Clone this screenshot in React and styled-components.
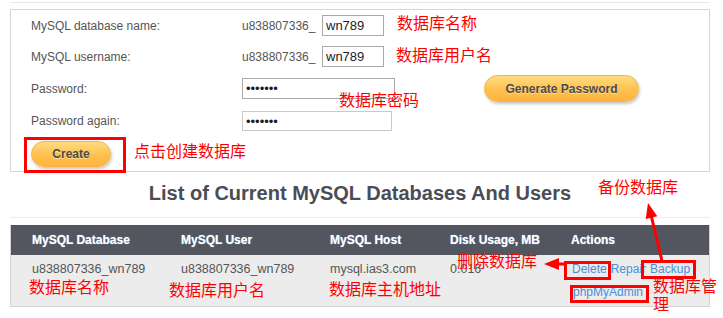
import React from "react";
import styled, { createGlobalStyle } from "styled-components";

const GlobalStyle = createGlobalStyle`
  body {
    margin: 0;
    background: #fff;
    font-family: "Liberation Sans", Arial, sans-serif;
  }
`;

const Page = styled.div`
  position: relative;
  width: 723px;
  height: 318px;
  padding: 2px 13px 0 10px;
  box-sizing: border-box;
  overflow: hidden;
`;

const TopRule = styled.div`
  border-top: 1px solid #e8e8e8;
  margin-bottom: 6px;
`;

const FormBox = styled.div`
  border: 1px solid #d6d6d6;
  padding: 0 0 4px 20px;
  display: grid;
  grid-template-columns: 211px 1fr;
  grid-template-rows: 31px 31px 33px 32px auto;
  align-items: center;
`;

const Label = styled.div`
  font-size: 12px;
  color: #555;
`;

const Field = styled.div`
  display: flex;
  align-items: center;
`;

const Prefix = styled.span`
  width: 80px;
  font-size: 12px;
  color: #555;
`;

const TextInput = styled.input`
  box-sizing: border-box;
  width: ${(p) => p.$w}px;
  height: ${(p) => p.$h || 21}px;
  border: 1px solid ${(p) => (p.$light ? "#c9c9c9" : "#a9a9a9")};
  padding: 0 3px;
  margin: 0;
  font-family: "Liberation Sans", Arial, sans-serif;
  font-size: 13px;
  color: #1b1b2b;
  background: #fff;
  outline: none;
`;

const OrangeButton = styled.button`
  box-sizing: border-box;
  width: ${(p) => p.$w}px;
  height: ${(p) => p.$h}px;
  margin-left: ${(p) => p.$ml || 0}px;
  border: 1px solid #f2b545;
  border-radius: 14px;
  background: linear-gradient(#ffdb80, #fec04f 55%, #fdb43c);
  box-shadow: 1px 2px 3px rgba(0, 0, 0, 0.22);
  font-family: "Liberation Sans", Arial, sans-serif;
  font-size: 12px;
  font-weight: bold;
  color: #4b4b4b;
  text-shadow: 0 1px 0 rgba(255, 255, 255, 0.5);
  padding: 0;
  cursor: pointer;
`;

const CreateRow = styled.div`
  grid-column: 1 / 3;
  padding-top: 4px;
`;

const Heading = styled.h2`
  margin: 0;
  height: 45px;
  line-height: 42px;
  text-align: center;
  font-size: 20px;
  font-weight: bold;
  color: #4a4d56;
  border-bottom: 1px solid #ececec;
`;

const Table = styled.div`
  margin-top: 7px;
  border: 1px solid #d3d3d3;
  border-top: none;
`;

const Row = styled.div`
  display: grid;
  grid-template-columns: 149px 149px 120px 121px 1fr;
  background: ${(p) => (p.$head ? "#53565e" : "#ececec")};
  height: ${(p) => (p.$head ? 30 : 51)}px;
  align-items: ${(p) => (p.$head ? "center" : "start")};
`;

const HeadCell = styled.div`
  padding-left: 21px;
  font-size: 12px;
  font-weight: bold;
  color: #fff;
  text-shadow: 0 0 1px #9cc3ec;
`;

const Cell = styled.div`
  padding: 6px 0 0 21px;
  font-size: 12.5px;
  line-height: 16px;
  color: #555;
`;

const LinkLine = styled.div`
  display: flex;
  gap: 4px;
  margin-bottom: ${(p) => p.$mb || 0}px;
  padding-left: ${(p) => p.$pl || 0}px;
`;

const Link = styled.a`
  color: #4a8fd8;
  font-size: 12px;
  text-decoration: none;
`;

/* annotation layer */
const Note = styled.div`
  position: absolute;
  left: ${(p) => p.$x}px;
  top: ${(p) => p.$y}px;
  width: ${(p) => (p.$w ? `${p.$w}px` : "auto")};
  white-space: ${(p) => (p.$w ? "normal" : "nowrap")};
  font-family: "Noto Sans CJK SC", sans-serif;
  font-size: 16px;
  line-height: 18px;
  color: #f00;
`;

const RedBox = styled.div`
  position: absolute;
  left: ${(p) => p.$x}px;
  top: ${(p) => p.$y}px;
  width: ${(p) => p.$w}px;
  height: ${(p) => p.$h}px;
  box-sizing: border-box;
  border: 3px solid #f00;
`;

const Arrows = styled.svg`
  position: absolute;
  left: 0;
  top: 0;
  pointer-events: none;
`;

export default function App() {
  return (
    <>
      <GlobalStyle />
      <Page>
        <TopRule />
        <FormBox>
          <Label>MySQL database name:</Label>
          <Field>
            <Prefix>u838807336_</Prefix>
            <TextInput $w={62} defaultValue="wn789" />
          </Field>
          <Label>MySQL username:</Label>
          <Field>
            <Prefix>u838807336_</Prefix>
            <TextInput $w={62} defaultValue="wn789" />
          </Field>
          <Label>Password:</Label>
          <Field>
            <TextInput $w={153} type="password" defaultValue="1234567" />
            <OrangeButton $w={155} $h={27} $ml={89}>
              Generate Password
            </OrangeButton>
          </Field>
          <Label>Password again:</Label>
          <Field>
            <TextInput $w={150} $h={20} $light type="password" defaultValue="1234567" />
          </Field>
          <CreateRow>
            <OrangeButton $w={80} $h={26}>
              Create
            </OrangeButton>
          </CreateRow>
        </FormBox>

        <Heading>List of Current MySQL Databases And Users</Heading>

        <Table>
          <Row $head>
            <HeadCell>MySQL Database</HeadCell>
            <HeadCell>MySQL User</HeadCell>
            <HeadCell>MySQL Host</HeadCell>
            <HeadCell>Disk Usage, MB</HeadCell>
            <HeadCell>Actions</HeadCell>
          </Row>
          <Row>
            <Cell>u838807336_wn789</Cell>
            <Cell>u838807336_wn789</Cell>
            <Cell>mysql.ias3.com</Cell>
            <Cell>0.016</Cell>
            <Cell>
              <LinkLine $mb={7} $pl={1}>
                <Link href="#">Delete</Link>
                <Link href="#">Repair</Link>
                <Link href="#">Backup</Link>
              </LinkLine>
              <LinkLine $pl={2}>
                <Link href="#">phpMyAdmin</Link>
              </LinkLine>
            </Cell>
          </Row>
        </Table>

        <Note $x={397} $y={13}>数据库名称</Note>
        <Note $x={396} $y={45}>数据库用户名</Note>
        <Note $x={339} $y={90}>数据库密码</Note>
        <Note $x={134} $y={141}>点击创建数据库</Note>
        <Note $x={598} $y={177}>备份数据库</Note>
        <Note $x={457} $y={251}>删除数据库</Note>
        <Note $x={29} $y={277}>数据库名称</Note>
        <Note $x={169} $y={280}>数据库用户名</Note>
        <Note $x={329} $y={279}>数据库主机地址</Note>
        <Note $x={653} $y={276} $w={66}>数据库管理</Note>

        <RedBox $x={24} $y={137} $w={102} $h={36} />
        <RedBox $x={564} $y={261} $w={47} $h={19} />
        <RedBox $x={641} $y={260} $w={55} $h={19} />
        <RedBox $x={570} $y={285} $w={79} $h={18} />

        <Arrows width="723" height="318" viewBox="0 0 723 318">
          <polygon points="544,264 559,258 559,270" fill="#f00" />
          <line x1="557" y1="264" x2="566" y2="264" stroke="#f00" strokeWidth="3" />
          <polygon points="648,203 657.3,216.2 645.7,219" fill="#f00" />
          <line x1="651.5" y1="217" x2="662" y2="261" stroke="#f00" strokeWidth="3" />
        </Arrows>
      </Page>
    </>
  );
}
